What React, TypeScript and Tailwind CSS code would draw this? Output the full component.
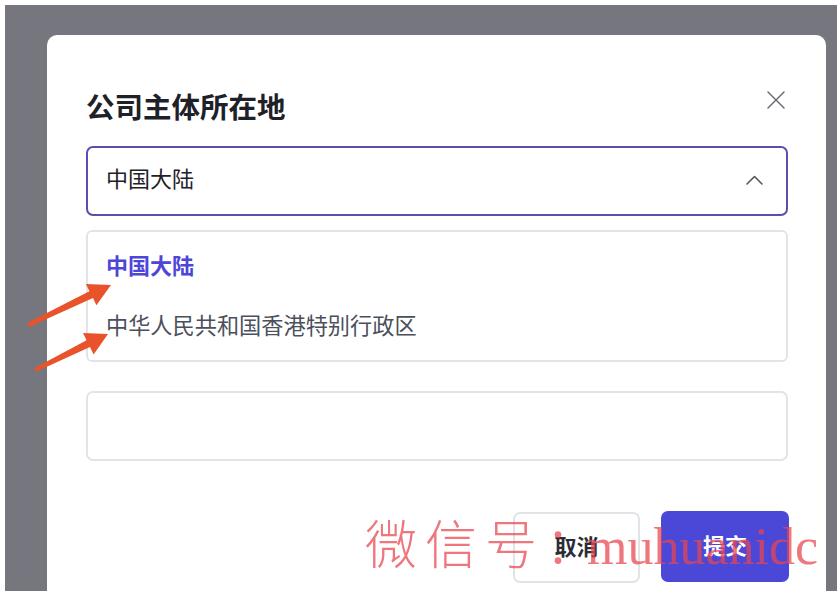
import React from "react";

export default function App() {
  return (
    <div className="relative w-[837px] h-[591px] overflow-hidden bg-white pt-[5px] pl-[5px] font-['Inter','Noto_Sans_CJK_SC',sans-serif]">
      <div className="h-full bg-[#76777e] pt-[30px] pl-[42px] pr-[11px]">
        <div className="h-full bg-white rounded-t-[10px] pl-[39px] pr-[38px] pt-[55px]">
          {/* header */}
          <div className="flex items-start justify-between">
            <h2 className="text-[28.5px] leading-[36px] font-semibold text-[#1f2128]">公司主体所在地</h2>
            <button className="mt-[1px] mr-[3px]">
              <svg width="18" height="18" viewBox="0 0 18 18" fill="none" stroke="#6b6e76" strokeWidth="1.5" strokeLinecap="round">
                <line x1="1" y1="1" x2="17" y2="17" />
                <line x1="17" y1="1" x2="1" y2="17" />
              </svg>
            </button>
          </div>

          {/* select */}
          <div className="mt-[20px] h-[70px] border-2 border-[#5a4fb0] rounded-[7px] flex items-center justify-between pl-[18px] pr-[23px] pb-[3px]">
            <span className="text-[22px] text-[#1f2128]">中国大陆</span>
            <svg width="17" height="10" viewBox="0 0 17 10" fill="none" stroke="#55575e" strokeWidth="1.6" strokeLinecap="round" strokeLinejoin="round">
              <polyline points="1,9 8.5,1.5 16,9" />
            </svg>
          </div>

          {/* dropdown */}
          <div className="mt-[14px] border-2 border-[#e4e4e8] rounded-[6px] py-[4px]">
            <div className="h-[60px] flex items-center px-[18px] text-[22px] font-semibold text-[#4e46d6]">中国大陆</div>
            <div className="h-[60px] flex items-center px-[18px] text-[22.2px] text-[#4b505b]">中华人民共和国香港特别行政区</div>
          </div>

          {/* empty input */}
          <div className="mt-[29px] h-[70px] border-2 border-[#e4e4e8] rounded-[7px]" />

          {/* buttons */}
          <div className="mt-[51px] flex justify-end gap-[21px]">
            <button className="w-[127px] h-[71px] border-2 border-[#e2e3e8] rounded-[7px] bg-white text-[22px] font-semibold text-[#2a2d35]">取消</button>
            <button className="w-[128px] h-[71px] rounded-[7px] bg-[#4b48d8] text-[22px] font-semibold text-white -mt-[1px] -mr-[1px]">提交</button>
          </div>
        </div>
      </div>

      {/* annotation arrows */}
      <svg className="absolute left-0 top-0 pointer-events-none" width="837" height="591" viewBox="0 0 837 591">
        <polygon
          fill="#e8532b"
          points="111,285 86,284 89.4,291.2 27.1,323.1 28.9,326.9 93,298 96.4,305.3"
        />
        <polygon
          fill="#e8532b"
          points="108,334 83,333 86.6,340.3 34.1,368.2 35.9,371.8 90,347.1 93.6,354.4"
        />
      </svg>

      {/* watermark */}
      <div className="absolute left-[365px] top-[521px] leading-none whitespace-nowrap pointer-events-none text-[rgba(232,70,80,0.74)]">
        <span className="text-[52px] font-light tracking-[8px] font-['Liberation_Serif','Noto_Sans_CJK_SC',serif]">微信号：</span>
        <span className="text-[52px] ml-[-18px] font-['Liberation_Serif',serif]">muhuanidc</span>
      </div>
    </div>
  );
}
